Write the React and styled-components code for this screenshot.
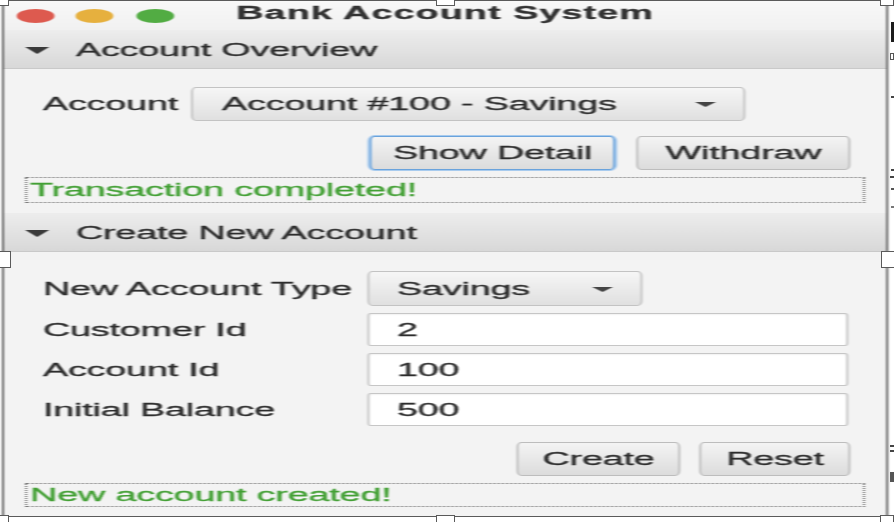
import React from 'react';
import styled, { createGlobalStyle } from 'styled-components';

const SX = 2.1;

const GlobalStyle = createGlobalStyle`
  html, body { margin: 0; padding: 0; background: #ffffff; }
  body { font-family: "Liberation Sans", Arial, Helvetica, sans-serif; overflow: hidden; }
  #root { width: 894px; height: 522px; }
`;

const Stage = styled.div`
  position: relative;
  width: 894px;
  height: 522px;
  display: flex;
  background: #ffffff;
  overflow: hidden;
`;

const WindowSlot = styled.div`
  flex: none;
  width: 888px;
  height: 517px;
  padding-left: 2px;
  box-sizing: border-box;
`;

const Window = styled.div`
  width: 422px;
  height: 517px;
  box-sizing: border-box;
  transform: scaleX(${SX});
  transform-origin: 0 0;
  border: 1px solid #5a5a5a;
  background: #f3f3f3;
  display: flex;
  flex-direction: column;
  color: #2e2e2e;
  font-size: 18px;
  letter-spacing: -0.1px;
  -webkit-text-stroke: 0.3px currentColor;
  filter: blur(0.45px);
`;

const TitleBar = styled.div`
  height: 29px;
  flex: none;
  display: grid;
  grid-template-columns: 1fr auto 1fr;
  align-items: center;
  background: linear-gradient(#f8f8f8, #f1f1f1);
`;

const Lights = styled.div`
  display: flex;
  gap: 10.5px;
  padding-left: 5.7px;
`;

const Light = styled.span`
  width: 18px;
  height: 14px;
  border-radius: 50%;
  background: ${(p) => p.$c};
`;

const Title = styled.div`
  font-weight: bold;
  letter-spacing: 0.5px;
  color: #333333;
  padding-bottom: 4px;
  white-space: nowrap;
`;

const Header = styled.div`
  height: 39px;
  flex: none;
  box-sizing: border-box;
  display: flex;
  align-items: center;
  padding: 2px 0 0 10.4px;
  gap: 12.3px;
  background: linear-gradient(#ededed, #d8d8d8);
  border-bottom: 1px solid #c9c9c9;
  color: #2e2e2e;
  white-space: nowrap;
`;

const Content = styled.div`
  flex: none;
  height: ${(p) => p.$h}px;
  box-sizing: border-box;
  padding: ${(p) => p.$pt}px 10px ${(p) => p.$pb}px 10.4px;
  display: flex;
  flex-direction: column;
  background: #f3f3f3;
`;

const AccountRow = styled.div`
  display: grid;
  grid-template-columns: 71px 263.3px;
  align-items: center;
  padding-left: 8.1px;
`;

const Label = styled.span`
  white-space: nowrap;
  padding-top: 1px;
  color: #2e2e2e;
`;

const Combo = styled.div`
  width: ${(p) => p.$w}px;
  height: ${(p) => p.$h}px;
  box-sizing: border-box;
  border: 1px solid #c3c3c3;
  border-radius: 2.4px / 5px;
  background: linear-gradient(#f6f6f6, #e0e0e0);
  display: flex;
  align-items: center;
  justify-content: space-between;
  padding: 1px 12.9px 0 13.3px;
  white-space: nowrap;
  color: #2e2e2e;
`;

const ButtonRow = styled.div`
  display: flex;
  justify-content: flex-end;
  align-items: center;
  gap: ${(p) => p.$gap}px;
  height: ${(p) => p.$h}px;
  margin-top: ${(p) => p.$mt}px;
  padding-right: 7.2px;
`;

const Button = styled.button`
  width: ${(p) => p.$w}px;
  height: 34px;
  box-sizing: border-box;
  padding: 1px 0 0;
  font: inherit;
  letter-spacing: -0.1px;
  color: #2e2e2e;
  -webkit-text-stroke: 0.3px currentColor;
  border: 1px solid ${(p) => (p.$focused ? '#6aa3dc' : '#bdbdbd')};
  border-radius: 2.4px / 5px;
  background: linear-gradient(#f4f4f4, #dcdcdc);
  box-shadow: ${(p) => (p.$focused ? '0 0 0 1px #a8cbee' : 'none')};
  white-space: nowrap;
`;

const Status = styled.div`
  height: ${(p) => p.$h}px;
  margin-top: ${(p) => p.$mt}px;
  box-sizing: border-box;
  border: 1px dotted #777777;
  display: flex;
  align-items: center;
  padding: 1px 0 0 1px;
  color: #43a035;
  white-space: nowrap;
`;

const FormGrid = styled.div`
  display: grid;
  grid-template-columns: 154.3px 229.5px;
  row-gap: 7px;
  align-items: center;
  padding-left: 8.1px;
`;

const Field = styled.input`
  width: 229.5px;
  height: 33px;
  box-sizing: border-box;
  border: 1px solid #c6c6c6;
  border-radius: 1.5px / 3px;
  background: #ffffff;
  box-shadow: inset 0 1px 1px rgba(0, 0, 0, 0.06);
  padding: 1px 0 0 13.3px;
  font: inherit;
  letter-spacing: -0.1px;
  color: #2e2e2e;
  -webkit-text-stroke: 0.3px currentColor;
  outline: none;
`;

const Strip = styled.div`
  flex: none;
  width: 6px;
  display: flex;
  flex-direction: column;
  align-items: flex-end;
`;

const Mark = styled.span`
  display: block;
  margin-top: ${(p) => p.$mt}px;
  width: ${(p) => p.$w}px;
  height: ${(p) => p.$h}px;
  background: ${(p) => p.$c || '#1c1c1c'};
  border: ${(p) => (p.$outline ? '1px solid #555' : 'none')};
  box-sizing: border-box;
`;

const Handle = styled.span`
  position: absolute;
  left: ${(p) => p.$x}px;
  top: ${(p) => p.$y}px;
  width: ${(p) => p.$w}px;
  height: ${(p) => p.$h}px;
  box-sizing: border-box;
  background: #ffffff;
  border: 1px solid #5a5a5a;
`;

const Tri = ({ w, h, color }) => (
  <svg width={w} height={h} viewBox={`0 0 ${w} ${h}`} style={{ display: 'block', flex: 'none' }}>
    <polygon points={`0,0 ${w},0 ${w / 2},${h}`} fill={color} />
  </svg>
);

const ComboBox = ({ w, h, children }) => (
  <Combo $w={w} $h={h}>
    <span>{children}</span>
    <Tri w={10} h={5} color="#444" />
  </Combo>
);

export default function App() {
  return (
    <>
      <GlobalStyle />
      <Stage>
        <WindowSlot>
          <Window>
            <TitleBar>
              <Lights>
                <Light $c="#dd5a4f" />
                <Light $c="#e6b03e" />
                <Light $c="#52ac43" />
              </Lights>
              <Title>Bank Account System</Title>
              <span />
            </TitleBar>

            <Header>
              <Tri w={11.5} h={7} color="#3a3a3a" />
              <span>Account Overview</span>
            </Header>
            <Content $h={144} $pt={18} $pb={10}>
              <AccountRow>
                <Label>Account</Label>
                <ComboBox w={263.3} h={34}>Account #100 - Savings</ComboBox>
              </AccountRow>
              <ButtonRow $gap={10.5} $h={36} $mt={14}>
                <Button $w={116.6} $focused>Show Detail</Button>
                <Button $w={101.4}>Withdraw</Button>
              </ButtonRow>
              <Status $h={26} $mt={6}>Transaction completed!</Status>
            </Content>

            <Header>
              <Tri w={11.5} h={7} color="#3a3a3a" />
              <span>Create New Account</span>
            </Header>
            <Content $h={264} $pt={19} $pb={9}>
              <FormGrid>
                <Label>New Account Type</Label>
                <ComboBox w={131.4} h={35}>Savings</ComboBox>
                <Label>Customer Id</Label>
                <Field defaultValue="2" readOnly />
                <Label>Account Id</Label>
                <Field defaultValue="100" readOnly />
                <Label>Initial Balance</Label>
                <Field defaultValue="500" readOnly />
              </FormGrid>
              <ButtonRow $gap={9.5} $h={34} $mt={16}>
                <Button $w={77.7}>Create</Button>
                <Button $w={71.4}>Reset</Button>
              </ButtonRow>
              <Status $h={24} $mt={7}>New account created!</Status>
            </Content>
          </Window>
        </WindowSlot>
        <Strip>
          <Mark $mt={22} $w={3} $h={20} />
          <Mark $mt={11} $w={4} $h={7} $c="#ffffff" $outline />
          <Mark $mt={36} $w={3} $h={2} $c="#444" />
          <Mark $mt={71} $w={3} $h={2} $c="#444" />
          <Mark $mt={5} $w={4} $h={2} $c="#444" />
          <Mark $mt={10} $w={3} $h={2} $c="#555" />
          <Mark $mt={16} $w={3} $h={2} $c="#777" />
          <Mark $mt={237} $w={4} $h={2} $c="#444" />
          <Mark $mt={3} $w={4} $h={2} $c="#444" />
          <Mark $mt={20} $w={4} $h={10} $c="#555" />
        </Strip>
        <Handle $x={-9} $y={-6} $w={18} $h={12} />
        <Handle $x={436} $y={-6} $w={19} $h={12} />
        <Handle $x={880} $y={-6} $w={14} $h={12} />
        <Handle $x={-7} $y={251} $w={18} $h={17} />
        <Handle $x={881} $y={251} $w={18} $h={17} />
        <Handle $x={-9} $y={515} $w={18} $h={12} />
        <Handle $x={436} $y={515} $w={19} $h={12} />
        <Handle $x={880} $y={515} $w={14} $h={12} />
      </Stage>
    </>
  );
}
